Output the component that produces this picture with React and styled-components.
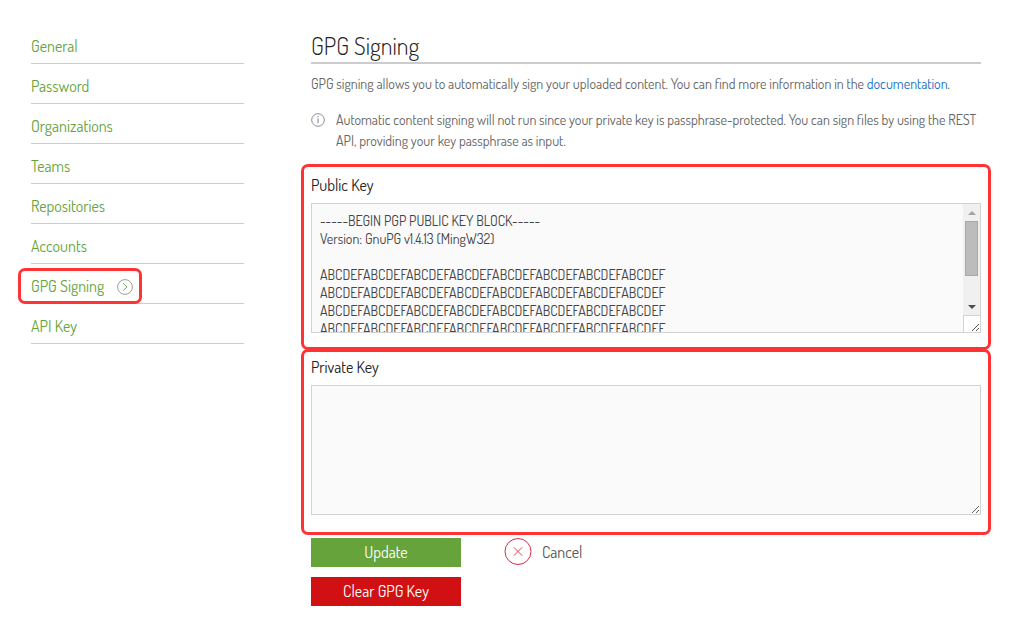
import React, { useState } from "react";
import styled, { createGlobalStyle } from "styled-components";

const menu = [
  "General",
  "Password",
  "Organizations",
  "Teams",
  "Repositories",
  "Accounts",
  "GPG Signing",
  "API Key",
];

const publicKeyText = [
  "-----BEGIN PGP PUBLIC KEY BLOCK-----",
  "Version: GnuPG v1.4.13 (MingW32)",
  "",
  ...Array(12).fill("ABCDEF".repeat(8)),
  "-----END PGP PUBLIC KEY BLOCK-----",
].join("\n");

const ArrowIcon = () => (
  <svg width="16" height="16" viewBox="0 0 16 16" fill="none" aria-hidden="true">
    <circle cx="8" cy="8" r="7.4" stroke="#9a9f97" strokeWidth="1" />
    <path d="M6.3 4.3L10 8l-3.7 3.7" stroke="#7fa568" strokeWidth="1" />
  </svg>
);

const InfoIcon = () => (
  <svg width="14" height="14" viewBox="0 0 14 14" fill="none" aria-hidden="true">
    <circle cx="7" cy="7" r="6.3" stroke="#808080" strokeWidth="0.9" />
    <path d="M7 5.5v4.8" stroke="#7b8ea0" strokeWidth="1.1" />
    <circle cx="7" cy="3.8" r="0.7" fill="#7b8ea0" />
  </svg>
);

const CancelIcon = () => (
  <svg width="28" height="28" viewBox="0 0 28 28" fill="none" aria-hidden="true">
    <circle cx="14" cy="13.5" r="13" stroke="#cf3048" strokeWidth="1" />
    <path d="M9.8 9.3l8.4 8.4M18.2 9.3l-8.4 8.4" stroke="#d8484f" strokeWidth="1" />
  </svg>
);

const GripIcon = () => (
  <svg width="16" height="16" viewBox="0 0 16 16" fill="none" aria-hidden="true">
    <path d="M8 15l7-7M12 15l3-3" stroke="#555" strokeWidth="1" />
  </svg>
);

export const App = () => {
  const [publicKey, setPublicKey] = useState(publicKeyText);
  const [privateKey, setPrivateKey] = useState("");

  return (
    <>
      <GlobalStyle />
      <Page>
        <Nav>
          {menu.map((name) => (
            <NavItem key={name}>
              <NavLink href="#" $active={name === "GPG Signing"}>
                {name}
                {name === "GPG Signing" && <ArrowIcon />}
              </NavLink>
            </NavItem>
          ))}
        </Nav>

        <Main>
          <Title>GPG Signing</Title>
          <Intro>
            GPG signing allows you to automatically sign your uploaded content. You can find more
            information in the <DocLink href="#">documentation</DocLink>.
          </Intro>
          <Note>
            <InfoIcon />
            <NoteText>
              Automatic content signing will not run since your private key is
              passphrase-protected. You can sign files by using the REST API, providing your key
              passphrase as input.
            </NoteText>
          </Note>

          <form onSubmit={(e) => e.preventDefault()}>
            <Field>
              <Label htmlFor="public-key">Public Key</Label>
              <KeyBox>
                <KeyText
                  id="public-key"
                  spellCheck={false}
                  value={publicKey}
                  onChange={(e) => setPublicKey(e.target.value)}
                />
                <ScrollBar aria-hidden="true">
                  <ScrollArrow $up />
                  <ScrollThumb />
                  <ScrollSpace />
                  <ScrollArrow />
                  <ScrollCorner>
                    <GripIcon />
                  </ScrollCorner>
                </ScrollBar>
              </KeyBox>
            </Field>

            <Field $second>
              <Label htmlFor="private-key">Private Key</Label>
              <KeyBox>
                <KeyText
                  id="private-key"
                  $resize
                  spellCheck={false}
                  value={privateKey}
                  onChange={(e) => setPrivateKey(e.target.value)}
                />
              </KeyBox>
            </Field>

            <Actions>
              <Button type="submit">Update</Button>
              <CancelButton type="button">
                <CancelIcon />
                Cancel
              </CancelButton>
            </Actions>
            <Button type="button" $danger>
              Clear GPG Key
            </Button>
          </form>
        </Main>
      </Page>
    </>
  );
};

export default App;

const GlobalStyle = createGlobalStyle`
  * {
    box-sizing: border-box;
  }

  body {
    margin: 0;
    background: #fff;
    color: #666;
    font-family: Dosis, "Roboto Condensed", "Liberation Sans", sans-serif;
    font-size: 14px;
    line-height: 21px;
  }
`;

const Page = styled.div`
  display: flex;
  gap: 67px;
  padding: 24px 41px 24px 31px;
`;

const Nav = styled.nav`
  flex: 0 0 213px;
`;

const NavItem = styled.div`
  display: flex;
  height: 40px;
  padding-top: 6px;
  border-bottom: 1px solid #ccc;
`;

const NavLink = styled.a`
  position: relative;
  display: flex;
  align-items: center;
  gap: 13px;
  color: #66a33a;
  font-size: 16px;
  text-decoration: none;

  ${(p) =>
    p.$active &&
    `
    &::after {
      content: "";
      position: absolute;
      inset: -2px -9px -1px -13px;
      border: 3px solid #ff3333;
      border-radius: 7px;
    }
  `}
`;

const Main = styled.main`
  flex: 1;
  min-width: 0;
`;

const Title = styled.h1`
  margin: 8px 0 9px;
  padding-bottom: 2px;
  border-bottom: 2px solid #ccc;
  color: #222;
  font-size: 24px;
  font-weight: 300;
  line-height: 28px;
`;

const Intro = styled.p`
  margin: 0 0 15px;
`;

const DocLink = styled.a`
  color: #2272c3;
  text-decoration: none;
`;

const Note = styled.div`
  display: flex;
  gap: 11px;
  margin-bottom: 13px;

  svg {
    flex: none;
    margin-top: 4px;
  }
`;

const NoteText = styled.p`
  margin: 0;
`;

const Field = styled.div`
  margin: ${(p) => (p.$second ? "-1px" : "0")} -10px 0;
  padding: ${(p) => (p.$second ? "3px 7px 17px" : "6px 7px 14px")};
  border: 3px solid #ff3333;
  border-radius: 7px;
`;

const Label = styled.label`
  display: block;
  margin-bottom: 6px;
  color: #222;
  font-size: 16px;
  line-height: 24px;
`;

const KeyBox = styled.div`
  display: flex;
  border: 1px solid #d3d3d3;
  background: #fafafa;
`;

const KeyText = styled.textarea`
  flex: 1;
  min-width: 0;
  height: 128px;
  padding: 8px;
  border: 0;
  outline: 0;
  background: transparent;
  color: #444;
  font: inherit;
  line-height: 18px;
  resize: ${(p) => (p.$resize ? "vertical" : "none")};
`;

const ScrollBar = styled.div`
  display: flex;
  flex-direction: column;
  align-items: center;
  width: 17px;
  background: #f0f0f0;
`;

const ScrollArrow = styled.span`
  display: flex;
  align-items: center;
  justify-content: center;
  height: 17px;

  &::before {
    content: "";
    border: solid transparent;
    border-width: ${(p) => (p.$up ? "0 4px 4px" : "4px 4px 0")};
    border-${(p) => (p.$up ? "bottom" : "top")}-color: ${(p) => (p.$up ? "#a3a3a3" : "#4d4d4d")};
  }
`;

const ScrollThumb = styled.span`
  width: 13px;
  height: 55px;
  border: 1px solid #a8a8a8;
  background: #bcbcbc;
`;

const ScrollSpace = styled.span`
  flex: 1;
`;

const ScrollCorner = styled.span`
  display: flex;
  width: 17px;
  height: 17px;
  border: solid #d3d3d3;
  border-width: 1px 0 0 1px;
  background: #fff;
`;

const Actions = styled.div`
  display: flex;
  align-items: flex-start;
  gap: 43px;
  margin: 3px 0 10px;
`;

const Button = styled.button`
  display: block;
  width: 150px;
  height: 29px;
  padding: 0;
  border: 0;
  background: ${(p) => (p.$danger ? "#d01012" : "#66a33a")};
  color: #fff;
  font: inherit;
  font-size: 16px;
  cursor: pointer;
`;

const CancelButton = styled.button`
  display: flex;
  align-items: flex-start;
  gap: 10px;
  height: 29px;
  padding: 0;
  border: 0;
  background: none;
  color: #555;
  font: inherit;
  font-size: 16px;
  line-height: 28px;
  cursor: pointer;
`;
